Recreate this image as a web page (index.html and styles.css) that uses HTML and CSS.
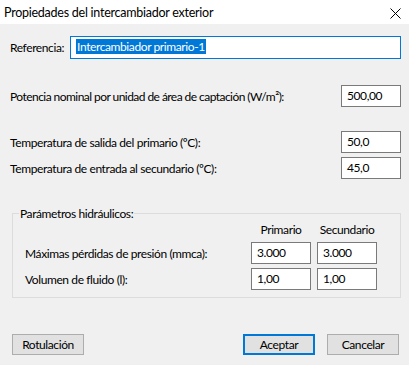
FILE: index.html
```html
<!DOCTYPE html>
<html lang="es">
  <head>
    <meta charset="UTF-8" />
    <title>Propiedades del intercambiador exterior</title>
    <link rel="stylesheet" href="styles.css">
  </head>
  <body>
    <div class="window">
      <div class="titlebar">
        <span class="caption">Propiedades del intercambiador exterior</span>
        <svg class="close" width="11" height="11" viewBox="0 0 11 11">
          <path d="M0.5 0.5 L10.5 10.5 M10.5 0.5 L0.5 10.5" stroke="#000" stroke-width="1" fill="none" />
        </svg>
      </div>

      <div class="content">
        <div class="row ref-row">
          <label>Referencia:</label>
          <div class="field wide focused"><span class="selected">Intercambiador primario-1</span></div>
        </div>

        <div class="row potencia">
          <label>Potencia nominal por unidad de área de captación (W/m²):</label>
          <div class="field">500,00</div>
        </div>

        <div class="row temp-first">
          <label>Temperatura de salida del primario (ºC):</label>
          <div class="field">50,0</div>
        </div>
        <div class="row temp-second">
          <label>Temperatura de entrada al secundario (ºC):</label>
          <div class="field">45,0</div>
        </div>

        <fieldset class="group">
          <legend>Parámetros hidráulicos:</legend>
          <div class="grid">
            <span></span>
            <span class="col-head">Primario</span>
            <span class="col-head">Secundario</span>

            <label>Máximas pérdidas de presión (mmca):</label>
            <div class="field">3.000</div>
            <div class="field">3.000</div>

            <label>Volumen de fluido (l):</label>
            <div class="field">1,00</div>
            <div class="field">1,00</div>
          </div>
        </fieldset>

        <div class="buttons">
          <button type="button" class="btn">Rotulación</button>
          <span class="spacer"></span>
          <button type="button" class="btn default">Aceptar</button>
          <button type="button" class="btn">Cancelar</button>
        </div>
      </div>
    </div>
  </body>
</html>
```

FILE: styles.css
```css
body {
  margin: 0;
  background: #f0f0f0;
  font-family: Lato, "Noto Sans", sans-serif;
  font-size: 12px;
  letter-spacing: -0.4px;
  color: #000;
}

.titlebar {
  height: 24px;
  background: #fff;
  display: flex;
  align-items: center;
  justify-content: space-between;
  padding: 0 8px 0 4px;
}

.caption {
  font-size: 12.5px;
  letter-spacing: -0.25px;
}

.close {
  margin-top: 2px;
}

.content {
  padding: 0 8px 0 10px;
}

.row {
  display: flex;
  align-items: center;
  justify-content: space-between;
}

.ref-row {
  margin-top: 12px;
}

.ref-row label {
  margin-right: 6px;
}

.potencia {
  margin-top: 26px;
}

.potencia label {
  letter-spacing: -0.55px;
}

.temp-first {
  margin-top: 24px;
}

.temp-second {
  margin-top: 4px;
}

.field {
  box-sizing: border-box;
  width: 60px;
  height: 22px;
  border: 1px solid #7a7a7a;
  background: #fff;
  padding: 1px 0 0 5px;
  line-height: 17px;
}

.field.wide {
  flex: 1;
  height: 23px;
}

.field.focused {
  border-color: #0078d7;
}

.selected {
  background: #0078d7;
  color: #fff;
  padding: 0 1px;
}

.group {
  margin: 27px 0 0 2px;
  border: 1px solid #dcdcdc;
  padding: 0 0 10px 12px;
  height: 92px;
  box-sizing: border-box;
}

.group legend {
  padding: 0 1px;
  margin-left: -6px;
}

.grid {
  display: grid;
  grid-template-columns: 1fr 60px 60px;
  column-gap: 6px;
  row-gap: 4px;
  padding-right: 23px;
  margin-top: -1px;
}

.col-head {
  text-align: center;
  line-height: 20px;
  margin-bottom: -2px;
}

.grid label {
  align-self: center;
}

.buttons {
  display: flex;
  margin-top: 36px;
  padding: 0 2px;
  gap: 12px;
}

.spacer {
  flex: 1;
}

.btn {
  width: 72px;
  height: 21px;
  box-sizing: border-box;
  background: #e1e1e1;
  border: 1px solid #adadad;
  font-family: inherit;
  font-size: 12px;
  letter-spacing: -0.4px;
  padding: 0;
}

.btn.default {
  border: 2px solid #0078d7;
}
```
